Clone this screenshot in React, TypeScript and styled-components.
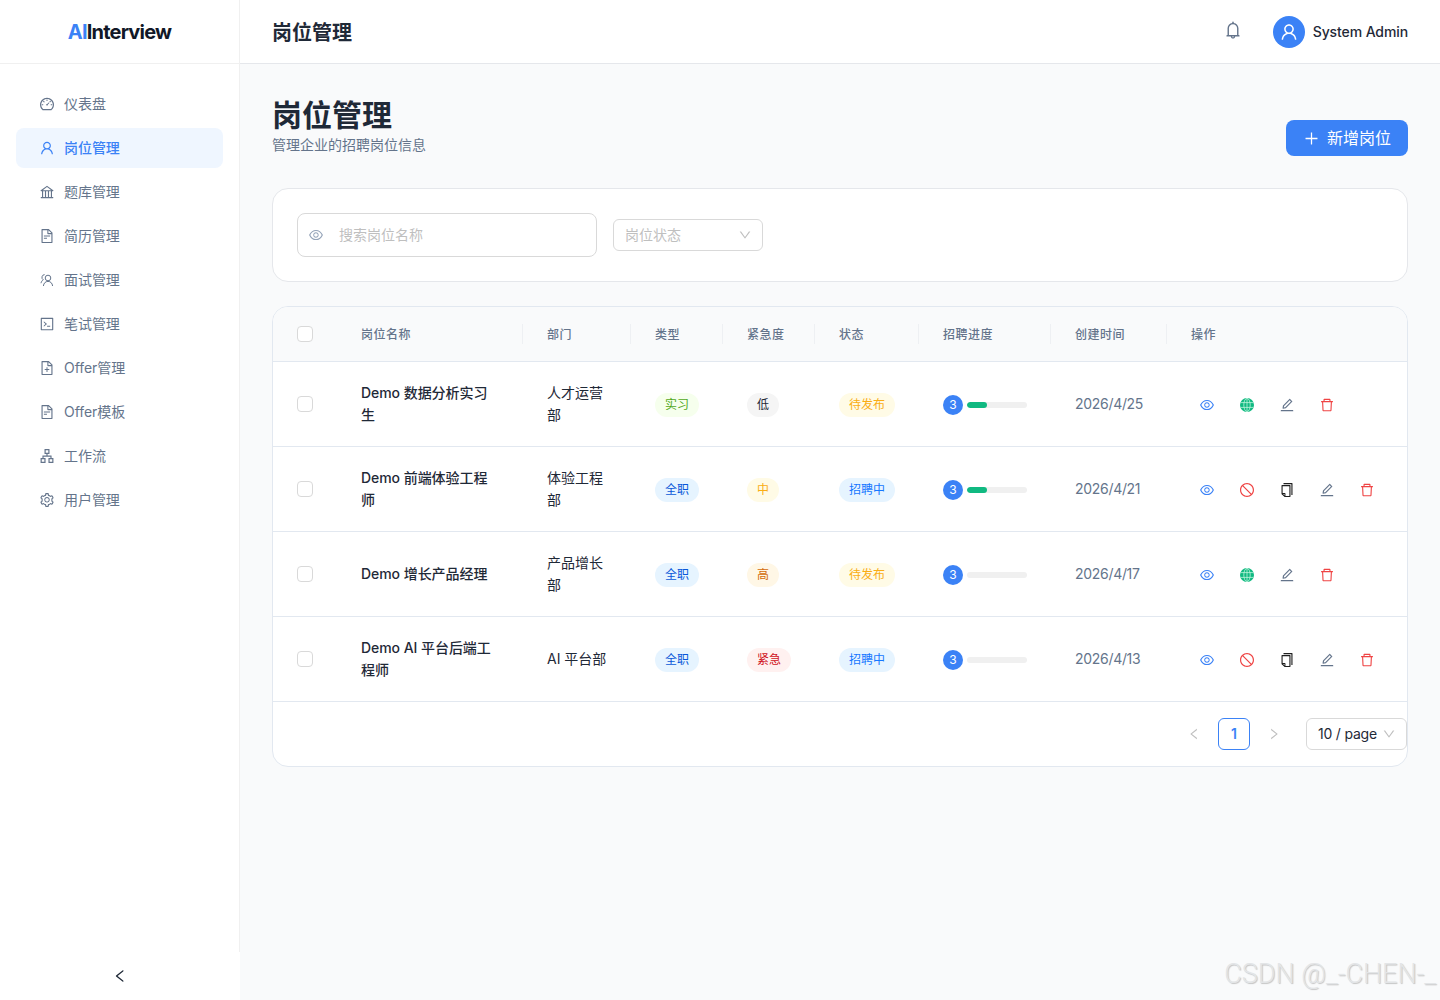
import { ReactNode } from "react"
import styled, { createGlobalStyle } from "styled-components"
import {
    AiOutlineApartment,
    AiOutlineBank,
    AiOutlineBell,
    AiOutlineCode,
    AiOutlineCopy,
    AiOutlineDashboard,
    AiOutlineDelete,
    AiOutlineDown,
    AiOutlineEdit,
    AiOutlineEye,
    AiOutlineFileAdd,
    AiOutlineFileText,
    AiOutlineLeft,
    AiOutlinePlus,
    AiOutlineRight,
    AiOutlineSetting,
    AiOutlineStop,
    AiOutlineUser,
} from "react-icons/ai"

const GlobalStyle = createGlobalStyle`
html, body {
    margin: 0;
    padding: 0;
    background: #f9fafb;
}
body {
    font-family: Inter, "Noto Sans CJK SC", "Noto Sans", sans-serif;
    font-size: 14px;
    color: #1f2937;
}
* {
    box-sizing: border-box;
}
`

const Layout = styled.div`
display: flex;
width: 100%;
min-height: 1000px;
position: relative;
`

const Sidebar = styled.aside`
width: 240px;
flex: none;
display: flex;
flex-direction: column;
background: #ffffff;
`

const SidebarBody = styled.div`
flex: 1;
border-right: 1px solid #f0f0f0;
`

const Logo = styled.div`
height: 64px;
display: flex;
align-items: center;
justify-content: center;
border-bottom: 1px solid #f0f0f0;
font-size: 20px;
font-weight: 700;
letter-spacing: -0.8px;
color: #111827;
`

const LogoAccent = styled.span`
color: #3b82f6;
`

const Menu = styled.nav`
display: flex;
flex-direction: column;
gap: 4px;
padding: 20px 16px 0;
`

const MenuItem = styled.div<{ $active?: boolean }>`
height: 40px;
display: flex;
align-items: center;
gap: 9px;
padding-left: 23px;
border-radius: 8px;
font-size: 14px;
letter-spacing: -0.05px;
color: ${(p) => (p.$active ? "#3b82f6" : "#64748b")};
background: ${(p) => (p.$active ? "#eff6ff" : "transparent")};
font-weight: ${(p) => (p.$active ? 500 : 400)};
svg {
    font-size: 16px;
    flex: none;
}
`

// lifts CJK text a pixel, its line box sits low next to Inter
const Label = styled.span`
margin-bottom: 2px;
`

const Collapse = styled.div`
height: 48px;
display: flex;
align-items: center;
justify-content: center;
color: #1f2937;
font-size: 16px;
`

const Main = styled.div`
flex: 1;
min-width: 0;
display: flex;
flex-direction: column;
`

const Header = styled.header`
height: 64px;
display: flex;
align-items: center;
justify-content: space-between;
padding: 0 32px;
background: #ffffff;
border-bottom: 1px solid #e5e7eb;
`

const HeaderTitle = styled.div`
font-size: 20px;
font-weight: 600;
color: #1f2937;
`

const HeaderRight = styled.div`
display: flex;
align-items: center;
`

const Bell = styled.span`
display: flex;
font-size: 20px;
color: #64748b;
margin-right: 30px;
margin-top: -4px;
`

const Avatar = styled.span`
width: 32px;
height: 32px;
border-radius: 50%;
background: #3b82f6;
color: #ffffff;
font-size: 20px;
display: flex;
align-items: center;
justify-content: center;
margin-right: 8px;
`

const UserName = styled.span`
font-size: 14px;
font-weight: 500;
letter-spacing: -0.1px;
color: #1f2937;
`

const Content = styled.main`
padding: 32px;
display: flex;
flex-direction: column;
gap: 24px;
`

const PageHead = styled.div`
display: flex;
align-items: flex-end;
justify-content: space-between;
margin-bottom: 8px;
`

const PageTitle = styled.h1`
margin: 0;
font-size: 30px;
line-height: 38px;
font-weight: 700;
color: #1f2937;
`

const PageSub = styled.p`
margin: 0;
font-size: 14px;
line-height: 22px;
color: #64748b;
`

const PrimaryButton = styled.button`
width: 122px;
height: 36px;
border: none;
border-radius: 8px;
background: #3b82f6;
color: #ffffff;
font-family: inherit;
font-size: 16px;
display: flex;
align-items: center;
justify-content: center;
gap: 7px;
padding: 0;
svg {
    font-size: 17px;
}
`

const Card = styled.section`
background: #ffffff;
border: 1px solid #e5e7eb;
border-radius: 16px;
`

const FilterCard = styled(Card)`
display: flex;
align-items: center;
gap: 16px;
padding: 24px;
`

const SearchBox = styled.div`
width: 300px;
height: 44px;
display: flex;
align-items: center;
gap: 15px;
padding: 0 10px;
border: 1px solid #d9d9d9;
border-radius: 8px;
color: #bfbfbf;
svg {
    color: #94a3b8;
    font-size: 16px;
}
`

const Select = styled.div<{ $width: number; $filled?: boolean }>`
width: ${(p) => p.$width}px;
height: 32px;
display: flex;
align-items: center;
justify-content: space-between;
padding: 0 10px 0 11px;
border: 1px solid #d9d9d9;
border-radius: 6px;
font-size: 14px;
color: ${(p) => (p.$filled ? "#1f2937" : "#bfbfbf")};
svg {
    font-size: 14px;
    color: #bfbfbf;
}
`

const TableCard = styled(Card)`
border-color: #e2e8f0;
overflow: hidden;
`

const Table = styled.table`
width: 100%;
border-collapse: collapse;
table-layout: fixed;
`

const HeadRow = styled.tr`
height: 54px;
background: #f9fafb;
border-bottom: 1px solid #e2e8f0;
`

const Th = styled.th`
position: relative;
padding: 0 24px;
text-align: left;
font-size: 12px;
font-weight: 500;
letter-spacing: 0.5px;
color: #64748b;
&:not(:first-child):not(:last-child)::after {
    content: "";
    position: absolute;
    right: 0;
    top: 17px;
    width: 1px;
    height: 20px;
    background: #eef0f3;
}
`

const Row = styled.tr`
height: 85px;
border-bottom: 1px solid #e2e8f0;
`

const Td = styled.td`
padding: 0 24px;
font-size: 14px;
line-height: 22px;
color: #1f2937;
`

const NameCell = styled(Td)`
font-weight: 500;
letter-spacing: -0.05px;
`

const DateCell = styled(Td)`
color: #64748b;
letter-spacing: -0.3px;
`

const ActionCell = styled(Td)`
padding-right: 0;
`

const Checkbox = styled.span`
display: block;
width: 16px;
height: 16px;
border: 1px solid #d9d9d9;
border-radius: 4px;
background: #ffffff;
`

const tones = {
    green: ["#f6ffed", "#52a81a"],
    gray: ["#f5f5f5", "#1f2937"],
    gold: ["#fffbe6", "#faad14"],
    blue: ["#e6f4ff", "#1677ff"],
    navy: ["#e6f4ff", "#0958d9"],
    orange: ["#fff7e6", "#d46b08"],
    red: ["#fff1f0", "#cf1322"],
}

type Tone = keyof typeof tones

const Tag = styled.span<{ $tone: Tone }>`
display: inline-block;
height: 24px;
line-height: 24px;
margin-top: 2px;
padding: 0 10px;
border-radius: 12px;
font-size: 12px;
background: ${(p) => tones[p.$tone][0]};
color: ${(p) => tones[p.$tone][1]};
vertical-align: middle;
`

const Progress = styled.div`
display: flex;
align-items: center;
gap: 4px;
margin-top: 2px;
`

const Count = styled.span`
width: 20px;
height: 20px;
border-radius: 50%;
background: #3b82f6;
color: #ffffff;
font-size: 12px;
display: flex;
align-items: center;
justify-content: center;
`

const Track = styled.div`
width: 60px;
height: 6px;
border-radius: 3px;
background: #f0f0f0;
overflow: hidden;
`

const Fill = styled.div`
height: 100%;
border-radius: 3px;
background: #10b981;
`

const Actions = styled.div`
display: flex;
gap: 8px;
margin-top: 2px;
`

const IconButton = styled.span<{ $color: string }>`
width: 32px;
height: 32px;
display: flex;
align-items: center;
justify-content: center;
font-size: 16px;
color: ${(p) => p.$color};
`

const Pagination = styled.div`
height: 64px;
display: flex;
align-items: center;
justify-content: flex-end;
`

const PageArrow = styled.span`
width: 32px;
height: 32px;
display: flex;
align-items: center;
justify-content: center;
font-size: 14px;
color: #bfbfbf;
`

const PageNumber = styled.span`
width: 32px;
height: 32px;
margin: 0 8px;
display: flex;
align-items: center;
justify-content: center;
border: 1px solid #3b82f6;
border-radius: 6px;
color: #3b82f6;
font-weight: 600;
`

const PageSize = styled(Select)`
margin-left: 16px;
letter-spacing: -0.2px;
`

const Watermark = styled.div`
position: absolute;
right: 4px;
bottom: 10px;
font-family: Roboto, "Liberation Sans", sans-serif;
font-size: 27px;
font-weight: 300;
line-height: 32px;
color: #e3e5e7;
text-shadow: 1px 1px 1px #c4c4c4;
pointer-events: none;
`

function UserGroup() {
    return (
        <svg width="16" height="16" viewBox="-1 -1 16 16" fill="none" stroke="currentColor" strokeWidth="1">
            <circle cx="8" cy="5" r="2.8" />
            <path d="M3.4 13c.3-2.8 2-4.6 4.6-4.6s4.3 1.8 4.6 4.6" />
            <path d="M4.6 1.6a2.8 2.8 0 0 0-1.3 5.2C2 7.5 1.3 8.8 1 10.2" />
        </svg>
    )
}

function Globe() {
    return (
        <svg width="14" height="14" viewBox="0 0 14 14" fill="none">
            <circle cx="7" cy="7" r="7" fill="#10b981" />
            <g stroke="#d1fae5" strokeWidth="0.7">
                <ellipse cx="7" cy="7" rx="3.2" ry="6.6" />
                <path d="M7 .4v13.2M.6 4.6h12.8M.6 9.4h12.8" />
            </g>
        </svg>
    )
}

const menu: { label: string; icon: ReactNode; active?: boolean }[] = [
    { label: "仪表盘", icon: <AiOutlineDashboard /> },
    { label: "岗位管理", icon: <AiOutlineUser />, active: true },
    { label: "题库管理", icon: <AiOutlineBank /> },
    { label: "简历管理", icon: <AiOutlineFileText /> },
    { label: "面试管理", icon: <UserGroup /> },
    { label: "笔试管理", icon: <AiOutlineCode /> },
    { label: "Offer管理", icon: <AiOutlineFileAdd /> },
    { label: "Offer模板", icon: <AiOutlineFileText /> },
    { label: "工作流", icon: <AiOutlineApartment /> },
    { label: "用户管理", icon: <AiOutlineSetting /> },
]

type Job = {
    name: string
    dept: string
    type: [string, Tone]
    urgency: [string, Tone]
    status: [string, Tone]
    progress: number
    date: string
}

const jobs: Job[] = [
    { name: "Demo 数据分析实习生", dept: "人才运营部", type: ["实习", "green"], urgency: ["低", "gray"], status: ["待发布", "gold"], progress: 33, date: "2026/4/25" },
    { name: "Demo 前端体验工程师", dept: "体验工程部", type: ["全职", "navy"], urgency: ["中", "gold"], status: ["招聘中", "blue"], progress: 33, date: "2026/4/21" },
    { name: "Demo 增长产品经理", dept: "产品增长部", type: ["全职", "navy"], urgency: ["高", "orange"], status: ["待发布", "gold"], progress: 0, date: "2026/4/17" },
    { name: "Demo AI 平台后端工程师", dept: "AI 平台部", type: ["全职", "navy"], urgency: ["紧急", "red"], status: ["招聘中", "blue"], progress: 0, date: "2026/4/13" },
]

const columns = [
    { label: "", width: 64 },
    { label: "岗位名称", width: 186 },
    { label: "部门", width: 108 },
    { label: "类型", width: 92 },
    { label: "紧急度", width: 92 },
    { label: "状态", width: 104 },
    { label: "招聘进度", width: 132 },
    { label: "创建时间", width: 116 },
    { label: "操作", width: 240 },
]

function JobActions({ status }: { status: string }) {
    const hiring = status === "招聘中"
    return (
        <Actions>
            <IconButton $color="#3b82f6"><AiOutlineEye /></IconButton>
            {hiring
                ? <IconButton $color="#ef4444"><AiOutlineStop /></IconButton>
                : <IconButton $color="#10b981"><Globe /></IconButton>}
            {hiring && <IconButton $color="#1f1f1f"><AiOutlineCopy /></IconButton>}
            <IconButton $color="#64748b"><AiOutlineEdit /></IconButton>
            <IconButton $color="#ef4444"><AiOutlineDelete /></IconButton>
        </Actions>
    )
}

export default function App() {
    return (
        <Layout>
            <GlobalStyle />
            <Sidebar>
                <SidebarBody>
                    <Logo><LogoAccent>AI</LogoAccent>Interview</Logo>
                    <Menu>
                        {menu.map((item) => (
                            <MenuItem key={item.label} $active={item.active}>
                                {item.icon}
                                <Label>{item.label}</Label>
                            </MenuItem>
                        ))}
                    </Menu>
                </SidebarBody>
                <Collapse><AiOutlineLeft /></Collapse>
            </Sidebar>
            <Main>
                <Header>
                    <HeaderTitle>岗位管理</HeaderTitle>
                    <HeaderRight>
                        <Bell><AiOutlineBell /></Bell>
                        <Avatar><AiOutlineUser /></Avatar>
                        <UserName>System Admin</UserName>
                    </HeaderRight>
                </Header>
                <Content>
                    <PageHead>
                        <div>
                            <PageTitle>岗位管理</PageTitle>
                            <PageSub>管理企业的招聘岗位信息</PageSub>
                        </div>
                        <PrimaryButton><AiOutlinePlus /><Label>新增岗位</Label></PrimaryButton>
                    </PageHead>
                    <FilterCard>
                        <SearchBox>
                            <AiOutlineEye />
                            <Label>搜索岗位名称</Label>
                        </SearchBox>
                        <Select $width={150}>
                            <Label>岗位状态</Label>
                            <AiOutlineDown />
                        </Select>
                    </FilterCard>
                    <TableCard>
                        <Table>
                            <colgroup>
                                {columns.map((c, i) => <col key={i} width={c.width} />)}
                            </colgroup>
                            <thead>
                                <HeadRow>
                                    {columns.map((c, i) => (
                                        <Th key={i}>{i === 0 ? <Checkbox /> : c.label}</Th>
                                    ))}
                                </HeadRow>
                            </thead>
                            <tbody>
                                {jobs.map((job) => (
                                    <Row key={job.name}>
                                        <Td><Checkbox /></Td>
                                        <NameCell>{job.name}</NameCell>
                                        <Td>{job.dept}</Td>
                                        <Td><Tag $tone={job.type[1]}>{job.type[0]}</Tag></Td>
                                        <Td><Tag $tone={job.urgency[1]}>{job.urgency[0]}</Tag></Td>
                                        <Td><Tag $tone={job.status[1]}>{job.status[0]}</Tag></Td>
                                        <Td>
                                            <Progress>
                                                <Count>3</Count>
                                                <Track>
                                                    <Fill style={{ width: `${job.progress}%` }} />
                                                </Track>
                                            </Progress>
                                        </Td>
                                        <DateCell>{job.date}</DateCell>
                                        <ActionCell><JobActions status={job.status[0]} /></ActionCell>
                                    </Row>
                                ))}
                            </tbody>
                        </Table>
                        <Pagination>
                            <PageArrow><AiOutlineLeft /></PageArrow>
                            <PageNumber>1</PageNumber>
                            <PageArrow><AiOutlineRight /></PageArrow>
                            <PageSize $width={101} $filled>
                                <span>10 / page</span>
                                <AiOutlineDown />
                            </PageSize>
                        </Pagination>
                    </TableCard>
                </Content>
            </Main>
            <Watermark>CSDN @_-CHEN-_</Watermark>
        </Layout>
    )
}
